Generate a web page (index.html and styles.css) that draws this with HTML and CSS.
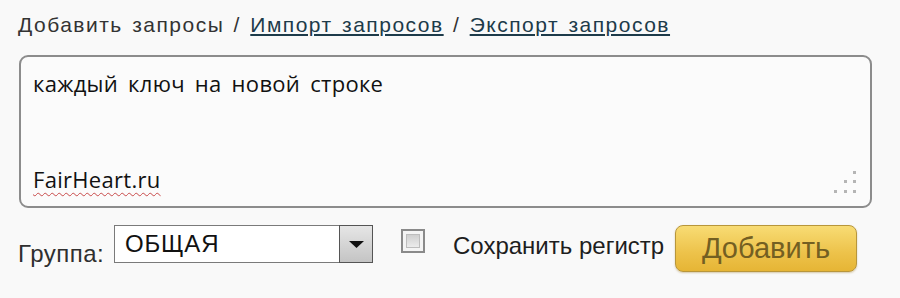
FILE: index.html
```html
<!DOCTYPE html>
<html lang="ru">
<head>
<meta charset="utf-8">
<link rel="stylesheet" href="styles.css">
</head>
<body>
<div class="page">
  <div class="tabs">Добавить запросы / <a class="link" href="#">Импорт запросов</a> / <a class="link" href="#">Экспорт запросов</a></div>
  <div class="editor">
    <div class="editor-text">каждый ключ на новой строке<br><br><br><span class="spell">FairHeart.ru</span></div>
    <svg class="grip" width="26" height="24" viewBox="0 0 26 24">
      <g fill="#b5b5b5">
        <rect x="20" y="0" width="3" height="3"/>
        <rect x="11" y="9" width="3" height="3"/>
        <rect x="20" y="9" width="3" height="3"/>
        <rect x="1" y="19" width="3" height="3"/>
        <rect x="11" y="19" width="3" height="3"/>
        <rect x="20" y="19" width="3" height="3"/>
      </g>
    </svg>
  </div>
  <div class="controls">
    <span class="label">Группа:</span>
    <div class="select">
      <span class="select-value">ОБЩАЯ</span>
      <span class="select-arrow">
        <svg width="15" height="7" viewBox="0 0 15 7"><polygon points="0,0 15,0 7.5,7" fill="#111"/></svg>
      </span>
    </div>
    <span class="checkbox"><span class="checkbox-inner"></span></span>
    <span class="check-label">Сохранить регистр</span>
    <button class="btn-add">Добавить</button>
  </div>
</div>
</body>
</html>
```

FILE: styles.css
```css
html, body {
  margin: 0;
  padding: 0;
  background: #f9f9f9;
}
.page {
  width: 900px;
  height: 298px;
  font-family: "Liberation Sans", Arial, sans-serif;
  color: #2a2a2a;
}
.tabs {
  padding: 13px 0 0 18px;
  font-size: 21px;
  line-height: 24px;
  letter-spacing: 1.5px;
  word-spacing: 2px;
  color: #333;
  height: 55px;
  box-sizing: border-box;
}
.link {
  color: #1d3b4a;
  text-decoration: underline;
  text-underline-offset: 2px;
}
.editor {
  position: relative;
  margin-left: 19px;
  width: 853px;
  height: 153px;
  box-sizing: border-box;
  border: 2px solid #8c8c8c;
  border-radius: 9px;
  background: #fbfbfb;
}
.editor-text {
  padding: 10px 0 0 12px;
  font-family: "Open Sans", "Noto Sans", sans-serif;
  font-size: 22px;
  line-height: 32px;
  letter-spacing: 0.3px;
  word-spacing: 4px;
  color: #111;
}
.spell {
  text-decoration: underline wavy #c84a4a;
  text-decoration-thickness: 1px;
  text-underline-offset: 4px;
}
.grip {
  position: absolute;
  right: 11px;
  bottom: 11px;
}
.controls {
  display: flex;
  align-items: flex-start;
  margin-top: 17px;
  height: 48px;
  padding-right: 43px;
}
.label {
  width: 114px;
  flex-shrink: 0;
  box-sizing: border-box;
  padding-left: 18px;
  margin-top: 17px;
  font-size: 24px;
  letter-spacing: 0.5px;
  line-height: 24px;
  color: #2f2f2f;
}
.select {
  display: flex;
  width: 259px;
  flex-shrink: 0;
  height: 38px;
  box-sizing: border-box;
  border: 1px solid #7a7a7a;
  background: #fff;
}
.select-value {
  flex: 1;
  padding: 0 0 0 10px;
  font-size: 24px;
  letter-spacing: 0.8px;
  line-height: 35px;
  color: #111;
}
.select-arrow {
  width: 34px;
  display: flex;
  align-items: center;
  justify-content: center;
  box-sizing: border-box;
  border: 1px solid #555;
  margin: -1px -1px -1px 0;
  background: linear-gradient(#e6e6e6, #c4c4c4);
}
.checkbox {
  margin: 4px 0 0 28px;
  width: 24px;
  height: 24px;
  flex-shrink: 0;
  box-sizing: border-box;
  border: 2px solid #8a8a8a;
  background: #f4f4f4;
  padding: 3px;
}
.checkbox-inner {
  display: block;
  width: 100%;
  height: 100%;
  background: linear-gradient(#cfcfcf, #ececec);
  border: 1px solid #bdbdbd;
  box-sizing: border-box;
}
.check-label {
  margin: 9px 0 0 28px;
  font-size: 24px;
  line-height: 24px;
  color: #1e1e1e;
  white-space: nowrap;
}
.btn-add {
  margin-left: auto;
  width: 182px;
  height: 47px;
  flex-shrink: 0;
  box-sizing: border-box;
  border: 1px solid #b8963b;
  border-radius: 8px;
  background: linear-gradient(#f8dc74, #edc24a 60%, #e6b535);
  box-shadow: 0 1px 2px rgba(150, 110, 20, 0.35);
  font-family: "Liberation Sans", Arial, sans-serif;
  font-size: 29px;
  line-height: 45px;
  color: #735f22;
  padding: 0;
  cursor: pointer;
}
```
